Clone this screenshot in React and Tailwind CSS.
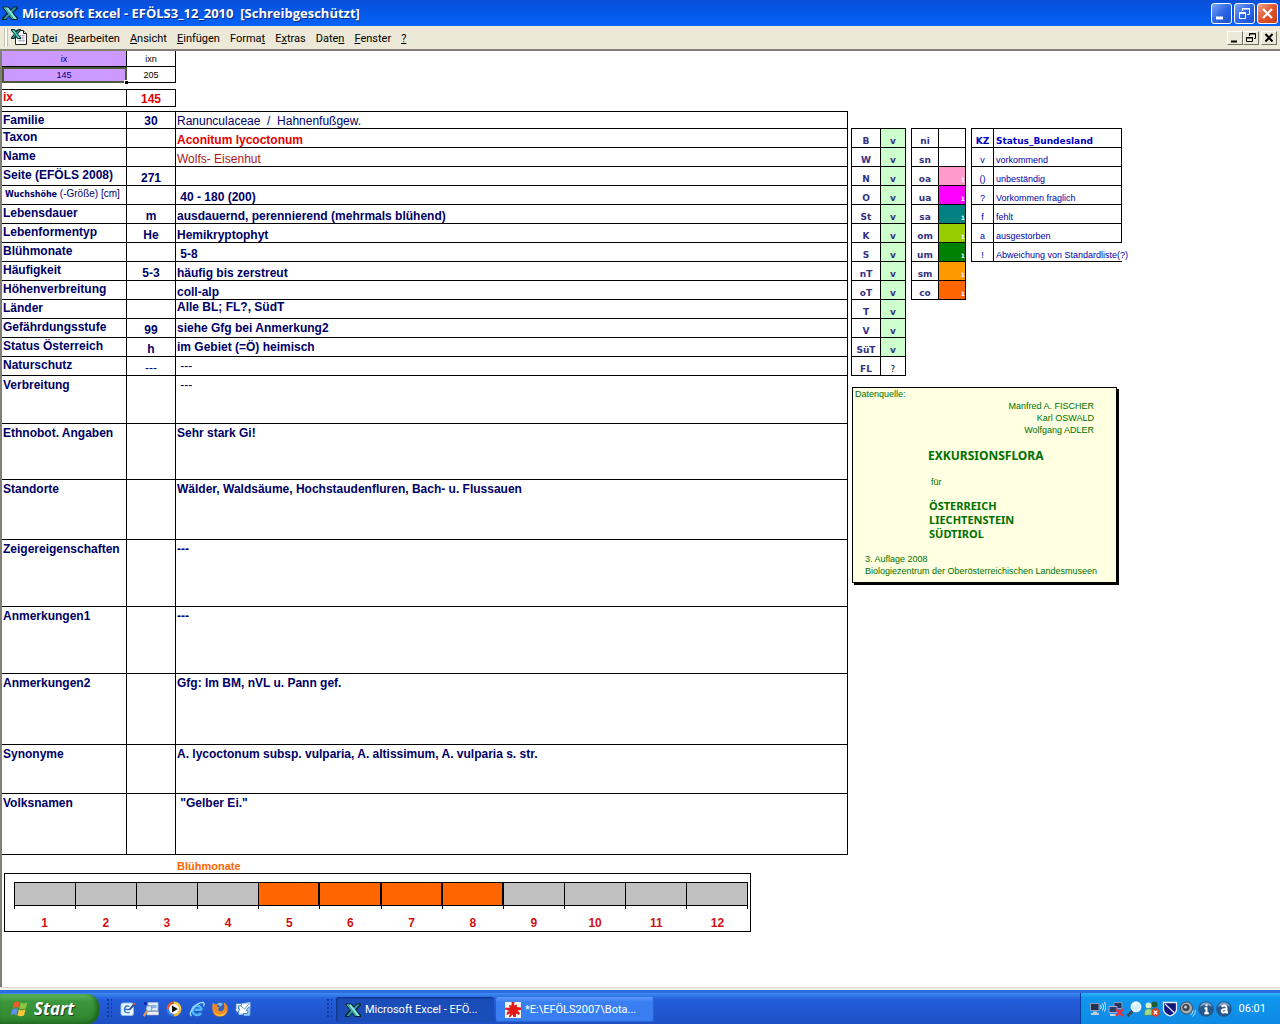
import React from 'react';

const menuItems = [
  ['', 'D', 'atei'],
  ['', 'B', 'earbeiten'],
  ['', 'A', 'nsicht'],
  ['', 'E', 'infügen'],
  ['Forma', 't', ''],
  ['E', 'x', 'tras'],
  ['Date', 'n', ''],
  ['', 'F', 'enster'],
  ['', '?', ''],
];

const bottom = 'align-bottom';
const middle = 'align-middle';
const top = 'align-top';

const rows = [
  { h: 'h-[17px]', label: 'Familie', code: '30', text: 'Ranunculaceae  /  Hahnenfußgew.', va: bottom, cls: 'font-normal' },
  { h: 'h-[19px]', label: 'Taxon', code: '', text: 'Aconitum lycoctonum', va: bottom, cls: 'text-[#e60000]' },
  { h: 'h-[19px]', label: 'Name', code: '', text: 'Wolfs- Eisenhut', va: bottom, cls: 'font-normal text-[#b01818]' },
  { h: 'h-[19px]', label: 'Seite (EFÖLS 2008)', code: '271', text: '', va: bottom },
  { h: 'h-[19px]', label: 'size', code: '', text: ' 40 - 180 (200)', va: bottom },
  { h: 'h-[19px]', label: 'Lebensdauer', code: 'm', text: 'ausdauernd, perennierend (mehrmals blühend)', va: bottom },
  { h: 'h-[19px]', label: 'Lebenformentyp', code: 'He', text: 'Hemikryptophyt', va: bottom },
  { h: 'h-[19px]', label: 'Blühmonate', code: '', text: ' 5-8', va: bottom },
  { h: 'h-[19px]', label: 'Häufigkeit', code: '5-3', text: 'häufig bis zerstreut', va: bottom },
  { h: 'h-[19px]', label: 'Höhenverbreitung', code: '', text: 'coll-alp', va: bottom },
  { h: 'h-[19px]', label: 'Länder', code: '', text: 'Alle BL; FL?, SüdT', va: top },
  { h: 'h-[19px]', label: 'Gefährdungsstufe', code: '99', text: 'siehe Gfg bei Anmerkung2', va: middle },
  { h: 'h-[19px]', label: 'Status Österreich', code: 'h', text: 'im Gebiet (=Ö) heimisch', va: middle },
  { h: 'h-[19px]', label: 'Naturschutz', code: '---', text: ' ---', va: middle, cls: 'font-normal' },
  { h: 'h-[48px]', label: 'Verbreitung', code: '', text: ' ---', va: top, tall: true, cls: 'font-normal' },
  { h: 'h-[56px]', label: 'Ethnobot. Angaben', code: '', text: 'Sehr stark Gi!', va: top, tall: true },
  { h: 'h-[60px]', label: 'Standorte', code: '', text: 'Wälder, Waldsäume, Hochstaudenfluren, Bach- u. Flussauen', va: top, tall: true },
  { h: 'h-[67px]', label: 'Zeigereigenschaften', code: '', text: '---', va: top, tall: true },
  { h: 'h-[67px]', label: 'Anmerkungen1', code: '', text: '---', va: top, tall: true },
  { h: 'h-[71px]', label: 'Anmerkungen2', code: '', text: 'Gfg: Im BM, nVL u. Pann gef.', va: top, tall: true },
  { h: 'h-[49px]', label: 'Synonyme', code: '', text: 'A. lycoctonum subsp. vulparia, A. altissimum, A. vulparia s. str.', va: top, tall: true },
  { h: 'h-[61px]', label: 'Volksnamen', code: '', text: ' "Gelber Ei."', va: top, tall: true },
];

const states = ['B', 'W', 'N', 'O', 'St', 'K', 'S', 'nT', 'oT', 'T', 'V', 'SüT', 'FL'];

const zones = [
  ['ni', 'bg-white'],
  ['sn', 'bg-white'],
  ['oa', 'bg-[#ff99cc]'],
  ['ua', 'bg-[#ff00ff]'],
  ['sa', 'bg-[#008080]'],
  ['om', 'bg-[#99cc00]'],
  ['um', 'bg-[#008000]'],
  ['sm', 'bg-[#ff9900]'],
  ['co', 'bg-[#ff6600]'],
];

const legend = [
  ['v', 'vorkommend'],
  ['()', 'unbeständig'],
  ['?', 'Vorkommen fraglich'],
  ['f', 'fehlt'],
  ['a', 'ausgestorben'],
  ['!', 'Abweichung von Standardliste(?)'],
];

function ExcelX({ size }) {
  return (
    <svg width={size} height={size} viewBox="0 0 16 16" aria-hidden="true">
      <path d="M.5 1.500h6l2.300 3 2.700-3H16v1.800L11.200 8l4.800 5v2H10L7.300 11.500 4.300 15H0v-2l4.700-5L.5 3z" fill="#0a2228" />
      <path d="M11.800 2.500h3L4 14H1.200z" fill="#2f9aa4" />
      <path d="M1.500 2.500H6L15 14h-4.600z" fill="#8fe6e0" />
      <path d="M2 2.500h1.500L12.300 14h-1.900z" fill="#2ba594" />
    </svg>
  );
}

function WorkbookIcon() {
  return (
    <svg width="17" height="17" viewBox="0 0 17 17" aria-hidden="true">
      <path d="M4.500 1.500h8l3 3v11h-11z" fill="#fff" stroke="#222" />
      <path d="M12.500 1.500v3h3" fill="#ddd" stroke="#222" />
      <path d="M9 6.500h5M9 9h5M7 11.500h7M9 6v7.500M12 6v7.500" stroke="#b4b4c0" fill="none" />
      <path d="M0 0h3.500L5.200 2.200 7 0h3v1.500L7 5l3 3.500V10H6.500L4.900 8 3.200 10H0V8.500L3 5 0 1.500z" fill="#0b2c30" />
      <path d="M1 1h2l6 8H7z" fill="#5ce0d4" />
      <path d="M9 1H7.500L1 9h1.500z" fill="#2fa8a0" />
    </svg>
  );
}

function WindowButton({ label, red, children }) {
  return (
    <button
      aria-label={label}
      className={
        'flex size-[21px] items-center justify-center rounded-[3px] border border-white ' +
        (red
          ? 'bg-linear-to-br from-[#f0a088] via-[#e0542c] to-[#c8401c]'
          : 'bg-linear-to-br from-[#7da4f4] via-[#2f66e4] to-[#1c50d0]')
      }
    >
      <svg width="19" height="19" viewBox="0 0 19 19" fill="none" stroke="#fff" aria-hidden="true">
        {children}
      </svg>
    </button>
  );
}

function SheetButton({ label, children }) {
  return (
    <button
      aria-label={label}
      className="flex h-[14px] w-4 items-center justify-center border border-t-white border-r-[#716f64] border-b-[#716f64] border-l-white bg-[#ece9d8]"
    >
      <svg width="14" height="12" viewBox="0 0 14 12" fill="none" stroke="#000" aria-hidden="true">
        {children}
      </svg>
    </button>
  );
}

function TitleBar() {
  return (
    <header className="flex h-[26px] items-center bg-linear-to-b from-[#0a4fd8] via-[#0558e8] to-[#0663fa] px-[2px]">
      <ExcelX size={16} />
      <h1 className="ml-1 flex-1 font-['Open_Sans',sans-serif] text-[13px] leading-4 font-bold whitespace-pre text-white [text-shadow:1px_1px_0_#0a2a80]">
        {'Microsoft Excel - EFÖLS3_12_2010  [Schreibgeschützt]'}
      </h1>
      <div className="flex gap-[2px]">
        <WindowButton label="Minimieren">
          <path d="M4 14h7" strokeWidth="3" />
        </WindowButton>
        <WindowButton label="Wiederherstellen">
          <path d="M7.500 7V4.500h7v6H12M7 5h8" />
          <path d="M4.500 8.500h6v6h-6zM4 9.500h7" />
        </WindowButton>
        <WindowButton label="Schließen" red>
          <path d="M5 5l9 9M14 5l-9 9" strokeWidth="2.200" />
        </WindowButton>
      </div>
    </header>
  );
}

function MenuBar() {
  return (
    <nav className="flex h-[23px] items-center bg-[#ece9d8] pr-[3px] pl-1">
      <span className="mr-[3px] h-[19px] w-1 border-r border-l border-r-[#c5c2b0] border-l-[#c5c2b0] bg-white" />
      <WorkbookIcon />
      <div className="mt-[2px] ml-1 flex flex-1 gap-[10px] font-['Roboto',sans-serif] text-[11px] leading-4 text-black">
        {menuItems.map(([a, u, b]) => (
          <button key={a + u + b}>
            {a}
            <span className="underline">{u}</span>
            {b}
          </button>
        ))}
      </div>
      <div className="flex">
        <SheetButton label="Mappe minimieren">
          <path d="M3 9.500h6" strokeWidth="2" />
        </SheetButton>
        <SheetButton label="Mappe wiederherstellen">
          <path d="M5.500 4V1.500h6v5H10M5 2h7M2.500 5.500h6v4h-6zM2 6h7" />
        </SheetButton>
        <span className="w-[2px]" />
        <SheetButton label="Mappe schließen">
          <path d="M3.500 2l7 7.500M10.500 2l-7 7.500" strokeWidth="2" />
        </SheetButton>
      </div>
    </nav>
  );
}

function IndexCells() {
  return (
    <>
      <table className="w-[174px] table-fixed border-separate border-spacing-0 text-center text-[9px] leading-3">
        <colgroup>
          <col className="w-[125px]" />
          <col className="w-[49px]" />
        </colgroup>
        <tbody>
          <tr className="h-4">
            <td className="border-r border-b border-black bg-[#cc99ff] p-0 text-[#000080]">ix</td>
            <td className="border-r border-b border-black p-0 text-black">ixn</td>
          </tr>
          <tr className="h-4">
            <td className="relative border-r border-b border-black bg-[#cc99ff] p-0 text-[#000080] outline-2 -outline-offset-2 outline-[#4d5a3a]">
              145
              <span className="absolute -right-[2px] -bottom-[2px] size-1 border-t border-l border-white bg-black" />
            </td>
            <td className="border-r border-b border-black p-0 text-black">205</td>
          </tr>
        </tbody>
      </table>
      <table className="mt-[6px] mb-1 w-[174px] table-fixed border-separate border-spacing-0 border-t border-black text-[12px] leading-[14px] font-bold text-[#e00000]">
        <colgroup>
          <col className="w-[125px]" />
          <col className="w-[49px]" />
        </colgroup>
        <tbody>
          <tr className="h-[17px]">
            <th className="border-r border-b border-black p-0 pl-px text-left align-top">ix</th>
            <td className="border-r border-b border-black p-0 text-center align-bottom">145</td>
          </tr>
        </tbody>
      </table>
    </>
  );
}

function RecordTable() {
  return (
    <table className="w-full table-fixed border-separate border-spacing-0 border-t border-black text-[12px] leading-[14px] font-bold text-[#000066]">
      <colgroup>
        <col className="w-[125px]" />
        <col className="w-[49px]" />
        <col />
      </colgroup>
      <tbody>
        {rows.map((r) => (
          <tr key={r.label} className={r.h}>
            <th className={'border-r border-b border-black p-0 pl-px text-left align-top whitespace-nowrap ' + (r.tall ? 'pt-[2px]' : 'pt-px')}>
              {r.label === 'size' ? (
                <span className="block pl-[2px] font-['DejaVu_Sans',sans-serif] text-[8px]">
                  Wuchshöhe <span className="font-['Liberation_Sans',sans-serif] text-[10px] font-normal">(-Größe) [cm]</span>
                </span>
              ) : (
                r.label
              )}
            </th>
            <td className={'border-r border-b border-black p-0 text-center align-bottom ' + (r.code === '---' ? 'font-normal' : '')}>{r.code}</td>
            <td className={'border-r border-b border-black p-0 pl-px whitespace-pre ' + r.va + ' ' + (r.tall ? 'pt-[2px] ' : '') + (r.cls || '')}>
              {r.text}
            </td>
          </tr>
        ))}
      </tbody>
    </table>
  );
}

function MonthChart() {
  return (
    <section aria-labelledby="bloom" className="text-[12px] leading-[14px] font-bold">
      <h2 id="bloom" className="mt-1 pl-[175px] text-[11px] text-[#ff6600]">Blühmonate</h2>
      <div className="ml-[2px] w-[88.3%] border border-black pt-2 pr-[2px] pl-[9px]">
        <div className="grid h-[27px] grid-cols-12 border-l border-black">
          {Array.from({ length: 12 }, (_, i) => (
            <div key={i} className="border-r border-black">
              <div className={'h-6 border-y border-black ' + (i > 3 && i < 8 ? 'border-r bg-[#ff6600]' : 'bg-[#c0c0c0]')} />
            </div>
          ))}
        </div>
        <div className="grid grid-cols-12 pt-[7px] pb-px text-center text-[#d01010]">
          {Array.from({ length: 12 }, (_, i) => (
            <span key={i}>{i + 1}</span>
          ))}
        </div>
      </div>
    </section>
  );
}

const cell = 'border-r border-b border-black p-0 align-bottom ';
const small = 'border-separate border-spacing-0 border-t border-l border-black text-[9px] leading-3 ';

function SideTables() {
  return (
    <div className="flex items-start gap-[5px] pt-[77px] pl-[3px]">
      <table className={small + "w-[55px] table-fixed text-center font-['DejaVu_Sans',sans-serif] text-[#333380]"}>
        <colgroup>
          <col className="w-[29px]" />
          <col className="w-[25px]" />
        </colgroup>
        <tbody>
          {states.map((s) => (
            <tr key={s} className="h-[19px]">
              <th className={cell}>{s}</th>
              {s === 'FL' ? (
                <td className={cell + 'text-black'}>?</td>
              ) : (
                <td className={cell + 'bg-[#ccffcc] font-bold'}>v</td>
              )}
            </tr>
          ))}
        </tbody>
      </table>
      <table className={small + "w-[55px] table-fixed text-center font-['DejaVu_Sans',sans-serif] text-[#333380]"}>
        <colgroup>
          <col className="w-[27px]" />
          <col className="w-[27px]" />
        </colgroup>
        <tbody>
          {zones.map(([z, color], i) => (
            <tr key={z} className="h-[19px]">
              <th className={cell}>{z}</th>
              <td className={cell + 'text-right text-[6px] leading-[10px] font-bold text-white ' + color}>{i > 1 ? '1' : ''}</td>
            </tr>
          ))}
        </tbody>
      </table>
      <table className={small + 'w-[151px] table-fixed text-[#0000a8]'}>
        <colgroup>
          <col className="w-[22px]" />
          <col className="w-[128px]" />
        </colgroup>
        <thead>
          <tr className="h-[19px] font-['DejaVu_Sans',sans-serif] text-[#0000c0]">
            <th className={cell}>KZ</th>
            <th className={cell + 'pl-[2px] text-left'}>Status_Bundesland</th>
          </tr>
        </thead>
        <tbody>
          {legend.map(([k, t]) => (
            <tr key={k} className="h-[19px]">
              <td className={cell + 'text-center'}>{k}</td>
              <td className={(k === '!' ? 'border-b border-black p-0 align-bottom ' : cell) + 'pl-[2px] whitespace-nowrap'}>{t}</td>
            </tr>
          ))}
        </tbody>
      </table>
    </div>
  );
}

function SourceCard() {
  return (
    <aside className="mt-[11px] ml-1 flex w-[265px] flex-col border border-black bg-[#ffffe1] pb-[5px] text-[9px] leading-3 text-[#007000] shadow-[2px_2px_0_#000]">
      <p className="pl-[2px]">Datenquelle:</p>
      <div className="pr-[22px] text-right">
        <p>Manfred A. FISCHER</p>
        <p>Karl OSWALD</p>
        <p>Wolfgang ADLER</p>
      </div>
      <h2 className="mt-3 pl-[75px] font-['Noto_Sans',sans-serif] text-[12px] leading-4 font-bold">EXKURSIONSFLORA</h2>
      <p className="mt-3 pl-[78px]">für</p>
      <div className="mt-[11px] pl-[76px] font-['Noto_Sans',sans-serif] text-[11px] leading-[14px] font-bold">
        <p>ÖSTERREICH</p>
        <p>LIECHTENSTEIN</p>
        <p>SÜDTIROL</p>
      </div>
      <div className="mt-3 pl-3 whitespace-nowrap">
        <p>3. Auflage 2008</p>
        <p>Biologiezentrum der Oberösterreichischen Landesmuseen</p>
      </div>
    </aside>
  );
}

function Icon({ size = 16, children }) {
  return (
    <svg width={size} height={size} viewBox="0 0 16 16" aria-hidden="true">
      {children}
    </svg>
  );
}

function Flag() {
  return (
    <svg width="20" height="18" viewBox="0 0 20 18" aria-hidden="true">
      <path d="M4.200 2.400Q7 .5 9.600 2.200L8.200 8Q5.300 6.500 2.600 8.200z" fill="#f0592a" />
      <path d="M10.600 2.800Q13.500 4.300 17.400 2.600L15.800 8.500Q12.500 10 9.200 8.500z" fill="#8cc63f" />
      <path d="M2.300 9.300Q5 7.600 7.900 9.100L6.400 15Q3.600 13.500.7 15.200z" fill="#5b8ff0" />
      <path d="M8.900 9.600Q12 11.200 15.500 9.600L14 15.500Q10.700 17 7.400 15.500z" fill="#ffc83a" />
    </svg>
  );
}

function Grip() {
  return (
    <span className="h-5 w-[5px] bg-[radial-gradient(circle_at_1px_1px,#123a9c_1px,transparent_1px)] bg-[size:4px_4px]" />
  );
}

const launchers = [
  ['Desktop anzeigen', (
    <>
      <rect x="1" y="2" width="12.500" height="12.500" rx="2" fill="#f0f8ff" stroke="#8cc0f0" />
      <path d="M9.500 5.500Q6 3.500 4.500 7.500q-1 5 5 4M5 8.500h4" fill="none" stroke="#2b74cc" strokeWidth="1.400" />
      <path d="M8.500 8.500l4.500-5.500 1.800 1.300-4.800 5z" fill="#274c8c" />
      <path d="M13 2.600l2.200 1.600.6-1.500-1.200-1z" fill="#e05030" />
    </>
  )],
  ['Suchen', (
    <>
      <path d="M5 1.500h10v8H5z" fill="#e4eefa" stroke="#9cb4d4" />
      <path d="M8 4h5.500v3H8z" fill="#86b4e4" />
      <path d="M4 10.500h11.500v3.500H4z" fill="#eeeef4" stroke="#a8b0c0" strokeWidth=".6" />
      <circle cx="6" cy="7.500" r="3" fill="#cfe9ff" stroke="#7a8cac" />
      <path d="M4.200 10l-3.500 5" stroke="#d89860" strokeWidth="2.200" />
      <path d="M2.500 1v3M1 2.500h3" stroke="#1020b0" strokeWidth="1.500" />
    </>
  )],
  ['Media Player', (
    <>
      <path d="M8 8V.5A7.500 7.500 0 0 1 15.500 8z" fill="#f5c83e" />
      <path d="M8 8H.5A7.500 7.500 0 0 1 8 .5z" fill="#e8582c" />
      <path d="M8 8v7.500A7.500 7.500 0 0 1 .5 8z" fill="#3c80e0" />
      <path d="M8 8h7.500A7.500 7.500 0 0 1 8 15.500z" fill="#e8b83c" />
      <circle cx="8" cy="8" r="5" fill="#f4f8ff" />
      <path d="M6 4.600L11.800 8 6 11.400z" fill="#111" />
    </>
  )],
  ['Internet Explorer', (
    <>
      <path d="M13 8.800H5.500M12.800 8.800A4.700 4.700 0 1 0 12 12" fill="none" stroke="#4fb8fa" strokeWidth="2.600" />
      <path d="M2.500 14.800C-2 12.500 7.500 1.500 13.500 1.400q2.800.3 1 3.900" fill="none" stroke="#a4dcff" strokeWidth="1.300" />
    </>
  )],
  ['Firefox', (
    <>
      <circle cx="8.300" cy="7.500" r="7" fill="#2f62c0" />
      <path d="M5.500 2.500q3-2 5.500.8l-3 2.500z" fill="#7fc0f0" />
      <path d="M1 1.500l2.300 2q1.500-.8 3-.3L5 5.500l2.800 1.200-2 1.600q1 2.500 4 1.600 3-1 2.400-5.400L11.500 1q4.400 2.500 4.300 7.300-.6 6.900-7.600 7.400Q.7 15.500.4 8.200 0 4.500 1 1.500z" fill="#f08a24" />
      <path d="M1.500 9q1.800 4.800 6.900 4.700 4.800-.4 6.200-5.300Q14 15.200 8.200 15 2.800 14.600 1.500 9z" fill="#ffcc40" />
    </>
  )],
  ['Outlook Express', (
    <>
      <path d="M4 3.500l11-2V12L4 13.500z" fill="#fff" stroke="#a4c8f0" />
      <path d="M4.500 4l5.300 4L14.500 2" fill="none" stroke="#6b9ad0" />
      <path d="M1 2.500h5.500v2.300H3.500V8H5l-2.800 3.800L0 8h1z" fill="#e4f2ff" stroke="#3278c8" strokeWidth=".7" />
      <path d="M15.200 15H8.500v-2.500h4.200V9.500H11l2.800-3.700L16 9.500h-.8z" fill="#9cd0fc" stroke="#2a6abc" strokeWidth=".7" />
    </>
  )],
];

const trayIcons = [
  ['Drahtlosnetzwerk', (
    <>
      <path d="M.5 2.500h8.500v7H.5z" fill="#24304c" stroke="#8c9cbc" />
      <path d="M3 10.500h4V12h2v2H1v-2h2z" fill="#c0cadc" />
      <path d="M10.500 4q1.500 2 0 4M12.500 2.500q2.500 3.500 0 7M14.500 1q3 5 0 9.500" fill="none" stroke="#d9ecff" />
    </>
  )],
  ['Netzwerk getrennt', (
    <>
      <path d="M6 1.500h8v6H6z" fill="#24345c" stroke="#8c9cbc" />
      <path d="M1 5.500h8v6H1z" fill="#2b3e70" stroke="#a0b0d0" />
      <path d="M2 13h7v2H2z" fill="#c8d2e4" />
      <path d="M8 8l7 7M15 8l-7 7" stroke="#e8303c" strokeWidth="2.400" />
    </>
  )],
  ['Lupe', (
    <>
      <path d="M7 9.500L1.500 15" stroke="#3d4658" strokeWidth="2.500" />
      <circle cx="10" cy="5.800" r="4.800" fill="#d4f0ff" stroke="#eef8ff" strokeWidth="1.300" />
      <path d="M7 5q1-2.500 3.500-2.500" fill="none" stroke="#fff" strokeWidth="1.300" />
    </>
  )],
  ['Messenger', (
    <>
      <circle cx="10.500" cy="3.500" r="3" fill="#1d5c34" />
      <path d="M7 13q0-7 4-7 4 1 4 5z" fill="#2878a0" />
      <circle cx="4.500" cy="4.500" r="3" fill="#d4f0c8" />
      <path d="M.5 14.500q-1-6.500 4-7Q9.500 8 9.500 14z" fill="#9cd890" stroke="#35704c" strokeWidth=".6" />
      <circle cx="11.500" cy="11.500" r="4.200" fill="#e04018" />
      <path d="M9.800 9.800l3.400 3.400M13.200 9.800l-3.400 3.400" stroke="#fff" strokeWidth="1.400" />
    </>
  )],
  ['Virenschutz', (
    <>
      <path d="M1.500 1.500h13V9q-1 4-6.500 6Q2.500 13 1.500 9z" fill="#10187c" stroke="#e8eefc" strokeWidth="1.300" />
      <path d="M3 3l9 8.500" stroke="#dfe6fa" strokeWidth="1.200" />
    </>
  )],
  ['Lautstärke', (
    <>
      <circle cx="6.500" cy="7" r="6" fill="#a8b0b8" stroke="#454c58" />
      <circle cx="6" cy="6.500" r="3.600" fill="#3d4450" />
      <circle cx="5.500" cy="6" r="1.500" fill="#cbd2dc" />
      <path d="M10.500 14q2.500-1.500 2.500-4.500M12.800 15.500q3-3 2.500-6.500" fill="none" stroke="#bfe0ff" />
    </>
  )],
  ['Info', (
    <>
      <circle cx="8" cy="8" r="7.800" fill="#275688" />
      <path d="M2 6a6.200 6.200 0 0 1 12 0Q8 2 2 6z" fill="#7aa4cc" />
      <path d="M8.500 3.500v1.800M6.500 7.300h2V12M6.300 12.300h4.500" fill="none" stroke="#fff" strokeWidth="2" />
    </>
  )],
  ['Avast', (
    <>
      <circle cx="8" cy="8" r="7.800" fill="#275688" />
      <path d="M2 6a6.200 6.200 0 0 1 12 0Q8 2 2 6z" fill="#7aa4cc" />
      <path d="M5.500 5.500Q10.500 3 10.500 7v4.500h1.500M10.500 8Q5 8 5.800 10.500T10.500 10" fill="none" stroke="#fff" strokeWidth="2" />
    </>
  )],
];

function TaskBar() {
  return (
    <footer className="flex h-[34px] items-stretch border-t-[3px] border-[#2d6de0] bg-linear-to-b from-[#3f8cf3] via-[#245edb] via-20% to-[#1d4fc4]">
      <button className="mt-px flex w-[99px] items-center gap-1 rounded-r-xl bg-linear-to-b from-[#5eb45e] via-[#3c983c] via-25% to-[#2f842f] pl-[10px] font-['Open_Sans',sans-serif] text-[17px] leading-5 font-bold text-white italic shadow-[inset_-3px_-2px_4px_#1d661d] [text-shadow:1px_1px_1px_#1c3c1c]">
        <Flag />
        Start
      </button>
      <div className="ml-2 flex w-[225px] items-center">
        <Grip />
        <div className="ml-2 flex flex-1 gap-[7px]">
          {launchers.map(([name, art]) => (
            <button key={name} aria-label={name}>
              <Icon>{art}</Icon>
            </button>
          ))}
        </div>
        <Grip />
      </div>
      <div className="mt-px ml-1 flex flex-1 items-center gap-[2px] font-['Roboto',sans-serif] text-[11px] leading-4 text-white">
        <button className="flex h-[25px] w-[158px] items-center gap-1 rounded-[3px] bg-[#1b4db8] pt-px pl-[9px] shadow-[inset_1px_1px_2px_#0d2f80]">
          <ExcelX size={16} />
          Microsoft Excel - EFÖ...
        </button>
        <button className="flex h-[25px] w-[158px] items-center gap-1 rounded-[3px] bg-linear-to-b from-[#5a9bfb] to-[#3a7ff2] to-20% pt-px pl-[9px] shadow-[inset_-1px_-1px_1px_#2862d0]">
          <Icon>
            <path d="M0 0h16v16H0z" fill="#f4f4f0" />
            <path d="M6.500 0h3L9 3.500l3-1L11.800 5l4.200.5V8l-3.500.5L15 11l-1 2-3-1.500V15H8.500l-1-2.500L5 15.500l-1-1 1-3L1.500 13l.5-3 2.500-1L0 7.500l.5-2 4.100.6L4 3l2.600.6z" fill="#e01818" />
          </Icon>
          {'*E:\\EFÖLS2007\\Bota...'}
        </button>
      </div>
      <div className="flex items-center gap-[2px] border-l border-[#0a3c9c] bg-linear-to-b from-[#2db4f8] via-[#0f97ee] via-15% to-[#0f8ae4] pr-[14px] pl-[9px] font-['Roboto',sans-serif] text-[11px] text-white">
        {trayIcons.map(([name, art]) => (
          <button key={name} aria-label={name}>
            <Icon>{art}</Icon>
          </button>
        ))}
        <time className="ml-[5px] pt-[2px]">06:01</time>
      </div>
    </footer>
  );
}

export default function App() {
  return (
    <div className="flex min-h-screen flex-col bg-white font-['Liberation_Sans',sans-serif]">
      <TitleBar />
      <MenuBar />
      <main className="grid flex-1 grid-cols-[846fr_432fr] content-start border-t-2 border-l-2 border-[#808076] bg-white">
        <div>
          <IndexCells />
          <RecordTable />
          <MonthChart />
        </div>
        <div>
          <SideTables />
          <SourceCard />
        </div>
      </main>
      <div className="h-[3px] border-t border-[#d8d4c0] bg-[#f6f4ea]" />
      <TaskBar />
    </div>
  );
}
